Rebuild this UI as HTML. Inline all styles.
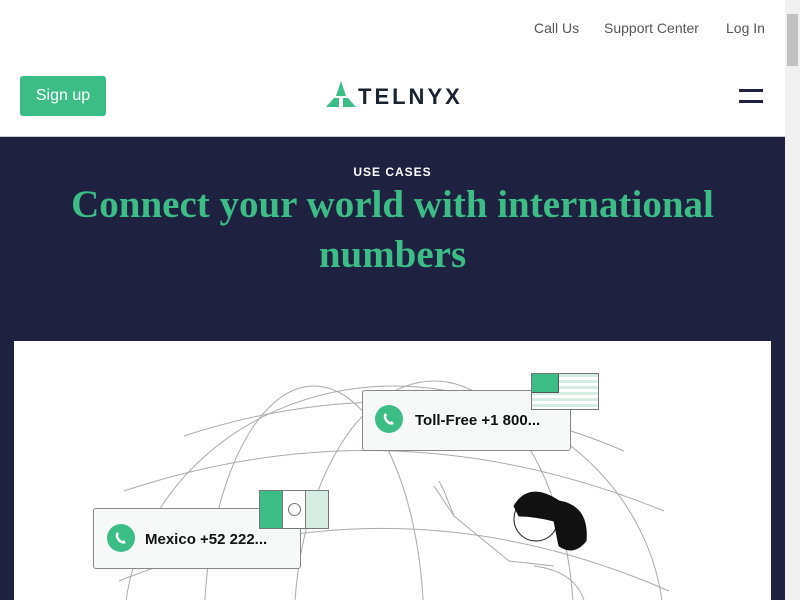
<!DOCTYPE html>
<html><head><style>
html,body{margin:0;width:800px;height:600px;overflow:hidden}
body{font-family:"Liberation Sans",sans-serif;background:#fff;position:relative}
.top a{position:absolute;top:20px;font-size:14px;color:#555}
.sb{position:absolute;right:0;top:0;width:15px;height:600px;background:#f1f1f1}
.sb div{position:absolute;left:2px;top:14px;width:11px;height:52px;background:#c1c1c1}
.hero{position:absolute;top:136px;left:0;width:785px;height:464px;background:#1e2140;border-top:1px solid #ccc}
.card{position:absolute;left:14px;top:341px;width:757px;height:259px;background:#fff}
.ph{position:absolute;width:28px;height:28px;border-radius:50%;background:#3dbd86}
.ph svg{position:absolute;left:7px;top:7px}
</style></head><body>
<div class="top"><a style="left:534px">Call Us</a><a style="left:604px">Support Center</a><a style="left:726px">Log In</a></div>
<div style="position:absolute;left:20px;top:76px;width:86px;height:40px;background:#3dbd86;border-radius:3px;color:#fff;font-size:16px;line-height:40px;text-align:center">Sign up</div>
<svg style="position:absolute;left:326px;top:81px" width="30" height="26"><polygon points="15,0 20,15 10,15" fill="#3dbd86"/><polygon points="8,17 13,17 13,26 0,26" fill="#3dbd86"/><polygon points="17,17 22,17 30,26 17,26" fill="#3dbd86"/></svg>
<div style="position:absolute;left:358px;top:84px;font-size:22px;font-weight:bold;letter-spacing:3px;color:#1a2330">TELNYX</div>
<div style="position:absolute;left:739px;top:89px;width:24px;height:3px;background:#1e2140"></div>
<div style="position:absolute;left:739px;top:100px;width:24px;height:3px;background:#1e2140"></div>
<div class="hero"></div>
<div style="position:absolute;top:165px;width:785px;text-align:center;color:#fff;font-size:12px;font-weight:bold;letter-spacing:1px">USE CASES</div>
<div style="position:absolute;top:180px;left:20px;width:745px;text-align:center;color:#3dbd86;font-family:'Liberation Serif',serif;font-weight:bold;font-size:39px;line-height:50px">Connect your world with international numbers</div>
<div class="card"></div>
<svg style="position:absolute;left:14px;top:341px" width="757" height="259" fill="none" stroke="#aaa" stroke-width="1">
<ellipse cx="380" cy="290" rx="270" ry="245"/><ellipse cx="300" cy="290" rx="110" ry="245"/><ellipse cx="420" cy="290" rx="140" ry="250"/>
<path d="M110 150 Q380 60 650 170"/><path d="M105 240 Q380 130 655 250"/><path d="M170 95 Q400 20 610 110"/>
<path d="M420 145 L440 175 L495 220 L540 225 M440 175 L430 150 L425 140"/>
<path d="M520 225 Q560 230 570 259"/>
<circle cx="522" cy="178" r="22" fill="#fff" stroke="#222"/>
<path d="M500 165 Q515 140 545 160 Q575 165 572 200 Q560 215 545 205 L540 180 Q520 175 505 175Z" fill="#111" stroke="#111"/>
</svg>
<div style="position:absolute;left:362px;top:390px;width:207px;height:59px;border:1px solid #888;border-radius:3px;background:#f6f9f8"></div>
<div class="ph" style="left:375px;top:405px"><svg width="14" height="14" viewBox="0 0 14 14"><path d="M3 1 Q0 5 4 10 Q8 14 12 12 L10 9 L8 10 Q5 8 4 5 L5 3Z" fill="#fff"/></svg></div>
<div style="position:absolute;left:415px;top:412px;font-size:15px;font-weight:bold;color:#111">Toll-Free +1 800...</div>
<div style="position:absolute;left:531px;top:373px;width:66px;height:35px;border:1px solid #777;background:repeating-linear-gradient(#d5ede3 0 3px,#fff 3px 6px)"></div>
<div style="position:absolute;left:532px;top:374px;width:26px;height:18px;background:#3dbd86;border-right:1px solid #555;border-bottom:1px solid #555"></div>
<div style="position:absolute;left:93px;top:508px;width:206px;height:59px;border:1px solid #888;border-radius:3px;background:#f6f9f8"></div>
<div class="ph" style="left:107px;top:524px"><svg width="14" height="14" viewBox="0 0 14 14"><path d="M3 1 Q0 5 4 10 Q8 14 12 12 L10 9 L8 10 Q5 8 4 5 L5 3Z" fill="#fff"/></svg></div>
<div style="position:absolute;left:145px;top:531px;font-size:15px;font-weight:bold;color:#111">Mexico +52 222...</div>
<div style="position:absolute;left:259px;top:490px;width:68px;height:37px;border:1px solid #777;display:flex"><div style="flex:1;background:#3dbd86"></div><div style="flex:1;background:#fff;border-left:1px solid #777;border-right:1px solid #777;position:relative"><div style="position:absolute;left:5px;top:12px;width:11px;height:11px;border:1px solid #777;border-radius:50%"></div></div><div style="flex:1;background:#d5ede3"></div></div>
<div class="sb"><div></div></div>
</body></html>
